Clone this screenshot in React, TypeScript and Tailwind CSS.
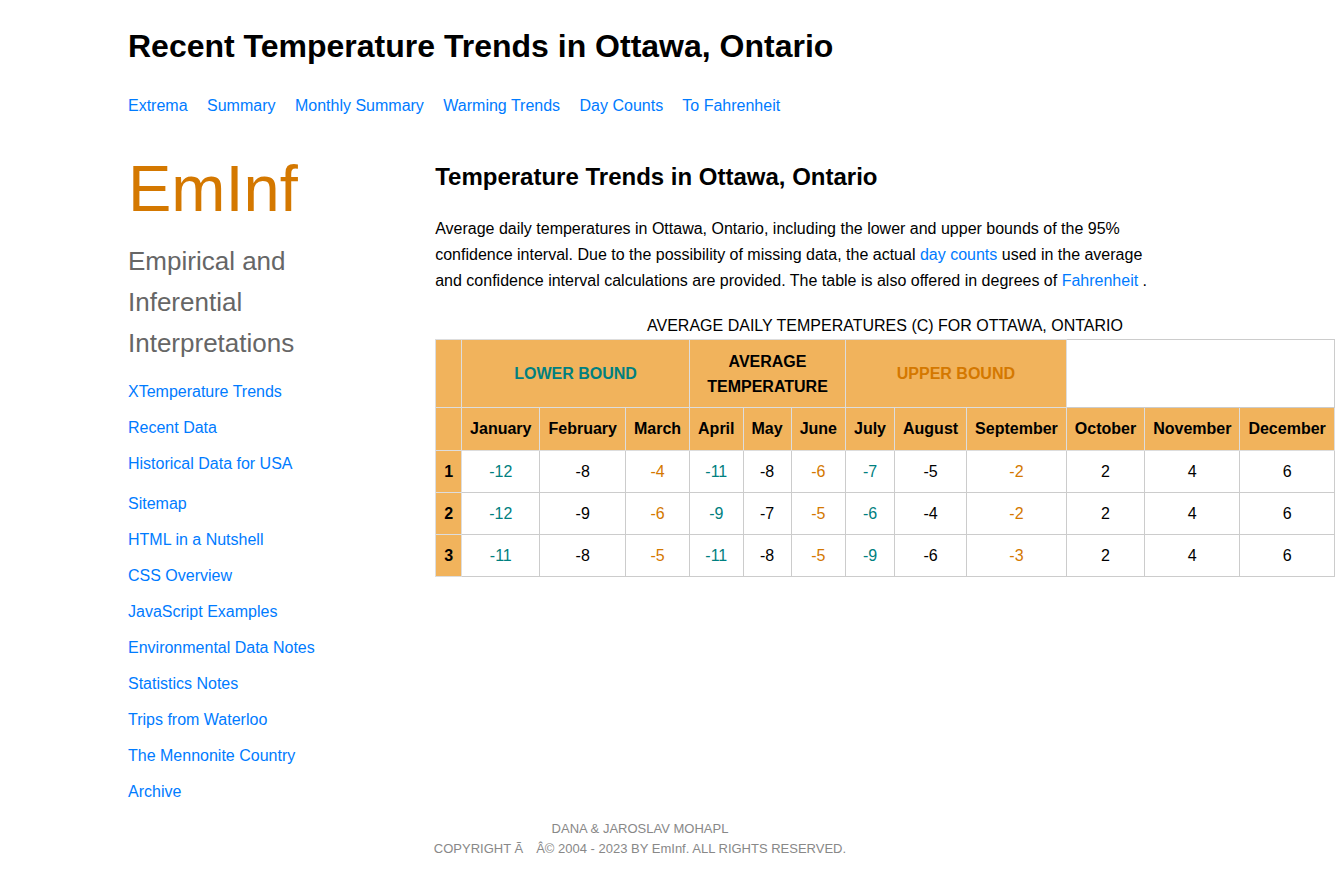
const topLinks = ["Extrema", "Summary", "Monthly Summary", "Warming Trends", "Day Counts", "To Fahrenheit"];
const dataLinks = ["XTemperature Trends", "Recent Data", "Historical Data for USA"];
const siteLinks = [
  "Sitemap",
  "HTML in a Nutshell",
  "CSS Overview",
  "JavaScript Examples",
  "Environmental Data Notes",
  "Statistics Notes",
  "Trips from Waterloo",
  "The Mennonite Country",
  "Archive",
];
const months = [
  "January", "February", "March", "April", "May", "June",
  "July", "August", "September", "October", "November", "December",
];
const rows = [
  [-12, -8, -4, -11, -8, -6, -7, -5, -2, 2, 4, 6],
  [-12, -9, -6, -9, -7, -5, -6, -4, -2, 2, 4, 6],
  [-11, -8, -5, -11, -8, -5, -9, -6, -3, 2, 4, 6],
];

const linkClass = "text-[#007bff] hover:underline";
const headClass = "border border-[#dddddd] bg-[#f1b35c] p-2 text-center font-bold";

// The first nine columns cycle through lower bound, average and upper bound.
function valueColor(column: number) {
  if (column > 8 || column % 3 === 1) return "text-black";
  return column % 3 === 0 ? "text-[#008080]" : "text-[#d47800]";
}

function LinkList({ items }: { items: string[] }) {
  return (
    <ul className="flex flex-col gap-2.5">
      {items.map((item) => (
        <li key={item}>
          <a href="#" className={linkClass}>{item}</a>
        </li>
      ))}
    </ul>
  );
}

function TemperatureTable() {
  return (
    <table className="border-collapse leading-[25px]">
      <caption className="leading-[26px]">AVERAGE DAILY TEMPERATURES (C) FOR OTTAWA, ONTARIO</caption>
      <thead>
        <tr className="h-[68px]">
          <td className={headClass}></td>
          <th colSpan={3} scope="colgroup" className={`${headClass} text-[#008080]`}>LOWER BOUND</th>
          <th colSpan={3} scope="colgroup" className={headClass}>AVERAGE TEMPERATURE</th>
          <th colSpan={3} scope="colgroup" className={`${headClass} text-[#d47800]`}>UPPER BOUND</th>
          <td colSpan={3} className="border border-[#cccccc]"></td>
        </tr>
        <tr className="leading-[26px]">
          <td className={headClass}></td>
          {months.map((month) => (
            <th key={month} scope="col" className={headClass}>{month}</th>
          ))}
        </tr>
      </thead>
      <tbody>
        {rows.map((row, index) => (
          <tr key={index}>
            <th scope="row" className={headClass}>{index + 1}</th>
            {row.map((value, column) => (
              <td key={column} className={`border border-[#cccccc] p-2 text-center ${valueColor(column)}`}>{value}</td>
            ))}
          </tr>
        ))}
      </tbody>
    </table>
  );
}

export default function App() {
  return (
    <div className="min-h-screen overflow-x-clip bg-white font-['Liberation_Sans',Arial,sans-serif] text-base leading-[26px] text-black">
      <div className="max-w-[1280px]">
        <div className="px-[10%]">
          <header className="pt-5">
            <h1 className="text-[32px] font-bold leading-[52px]">Recent Temperature Trends in Ottawa, Ontario</h1>
            <nav className="mt-[21px]">
              {topLinks.map((item) => (
                <span key={item}>
                  <a href="#" className={`${linkClass} mr-[15px]`}>{item}</a>{" "}
                </span>
              ))}
            </nav>
          </header>
          <div className="mt-[19px] flex">
            <aside className="w-[30%] shrink-0 pr-16">
              <p className="text-[65px] leading-[102px] text-[#d47800]">EmInf</p>
              <p className="mt-px text-[26px] leading-[41px] text-[#666666]">Empirical and Inferential Interpretations</p>
              <nav className="mt-[15px] flex flex-col gap-3.5">
                <LinkList items={dataLinks} />
                <LinkList items={siteLinks} />
              </nav>
            </aside>
            <main className="w-[70%] min-w-0 pt-5">
              <h2 className="text-2xl font-bold leading-[38px]">Temperature Trends in Ottawa, Ontario</h2>
              <p className="mt-5">
                Average daily temperatures in Ottawa, Ontario, including the lower and upper bounds of the 95%
                confidence interval. Due to the possibility of missing data, the actual{" "}
                <a href="#" className={linkClass}>day counts</a> used in the average and confidence interval
                calculations are provided. The table is also offered in degrees of{" "}
                <a href="#" className={linkClass}>Fahrenheit</a> .
              </p>
              <div className="mt-[19px]">
                <TemperatureTable />
              </div>
            </main>
          </div>
        </div>
        <footer className="mt-3.5 pb-5 text-center text-[13px] leading-5 text-[#888888]">
          <p>DANA &amp; JAROSLAV MOHAPL</p>
          <p>COPYRIGHT Ã&emsp;Â© 2004 - 2023 BY EmInf. ALL RIGHTS RESERVED.</p>
        </footer>
      </div>
    </div>
  );
}
